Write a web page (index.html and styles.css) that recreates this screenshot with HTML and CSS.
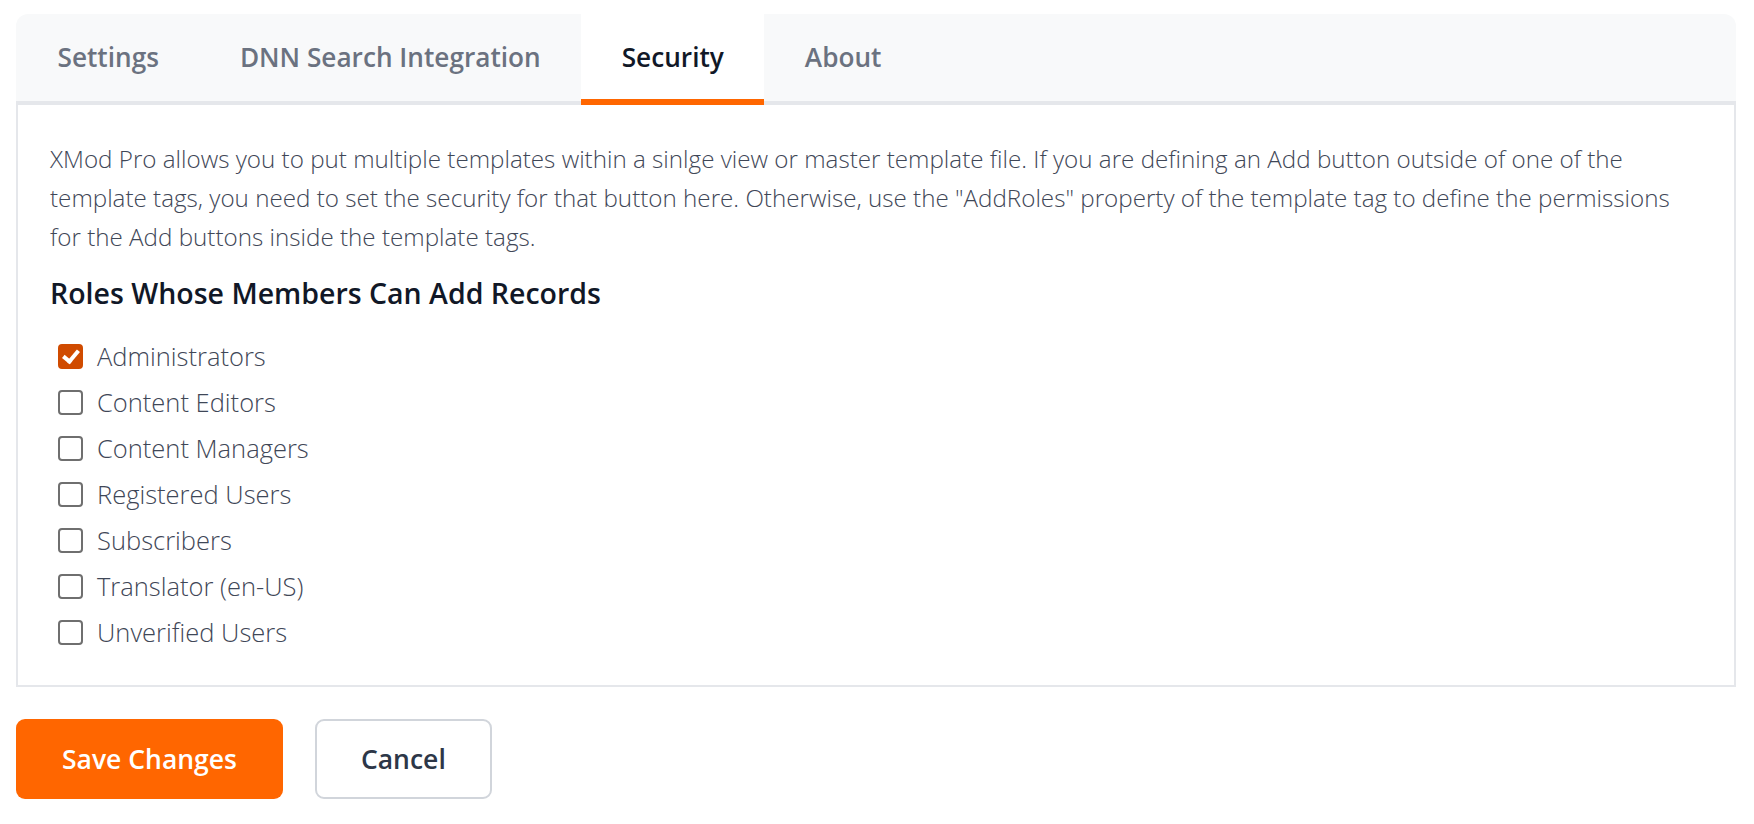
FILE: index.html
```html
<!DOCTYPE html>
<html lang="en">
<head>
    <meta charset="UTF-8">
    <meta name="viewport" content="width=device-width, initial-scale=1.0">
    <title>XMod Pro - Security</title>
    <link rel="stylesheet" href="styles.css">
</head>
<body>
    <div class="page">
        <ul class="tabs">
            <li class="tab">Settings</li>
            <li class="tab">DNN Search Integration</li>
            <li class="tab active">Security</li>
            <li class="tab">About</li>
        </ul>

        <div class="panel">
            <p class="intro">XMod Pro allows you to put multiple templates within a sinlge view or master template file. If you are defining an Add button outside of one of the template tags, you need to set the security for that button here. Otherwise, use the "AddRoles" property of the template tag to define the permissions for the Add buttons inside the template tags.</p>

            <h3 class="section-title">Roles Whose Members Can Add Records</h3>

            <ul class="roles">
                <li><label><input type="checkbox" checked> <span>Administrators</span></label></li>
                <li><label><input type="checkbox"> <span>Content Editors</span></label></li>
                <li><label><input type="checkbox"> <span>Content Managers</span></label></li>
                <li><label><input type="checkbox"> <span>Registered Users</span></label></li>
                <li><label><input type="checkbox"> <span>Subscribers</span></label></li>
                <li><label><input type="checkbox"> <span>Translator (en-US)</span></label></li>
                <li><label><input type="checkbox"> <span>Unverified Users</span></label></li>
            </ul>
        </div>

        <div class="actions">
            <button type="button" class="btn btn-primary">Save Changes</button>
            <button type="button" class="btn btn-default">Cancel</button>
        </div>
    </div>
</body>
</html>
```

FILE: styles.css
```css
body { margin: 0; background: #fff; font-family: "Open Sans", "Noto Sans", sans-serif; color: #374151; }
.page { padding: 14px 18px 0 16px; }

.tabs { display: flex; list-style: none; margin: 0; padding: 0; background: #f8f9fa; border-bottom: 4px solid #e5e7eb; border-radius: 12px 12px 0 0; }
.tab { margin-bottom: -4px; padding: 1px 40.5px 0; line-height: 84px; border-bottom: 6px solid transparent; font-size: 26.2px; font-weight: 600; color: #6b7280; cursor: pointer; }
.tab:first-child { padding-left: 41.5px; }
.tab.active { background: #fff; color: #111827; border-bottom-color: #ff6600; }

.panel { background: #fff; border: 2px solid #e5e7eb; border-top: none; padding: 34px 32px 30px; }
.intro { margin: 0 0 19px; font-size: 24.2px; font-weight: 300; line-height: 39px; color: #3f4757; }
.section-title { margin: 0 0 22px; font-size: 28.5px; font-weight: 600; line-height: 36px; color: #111827; }

.roles { list-style: none; margin: 0; padding: 0 0 0 8px; }
.roles li { height: 46px; display: flex; align-items: center; }
.roles label { display: flex; align-items: center; gap: 14px; font-size: 25.5px; font-weight: 300; color: #3f4757; cursor: pointer; }
.roles input { appearance: none; margin: 0; width: 25px; height: 25px; border: 2px solid #6f6f6f; border-radius: 4px; background: #fff; position: relative; }
.roles input:checked { background: #d04b00; border-color: #d04b00; }
.roles input:checked::after { content: ""; position: absolute; left: 6px; top: 1px; width: 6px; height: 12px; border: solid #fff; border-width: 0 4px 4px 0; transform: rotate(40deg); }

.actions { display: flex; gap: 32px; margin-top: 32px; }
.btn { height: 80px; border-radius: 9px; font-family: inherit; font-size: 26.5px; font-weight: 600; cursor: pointer; }
.btn-primary { padding: 0 46px; background: #ff6600; border: none; color: #fff; }
.btn-default { padding: 0 44px; background: #fff; border: 2px solid #d1d5db; color: #2d3748; }
```
